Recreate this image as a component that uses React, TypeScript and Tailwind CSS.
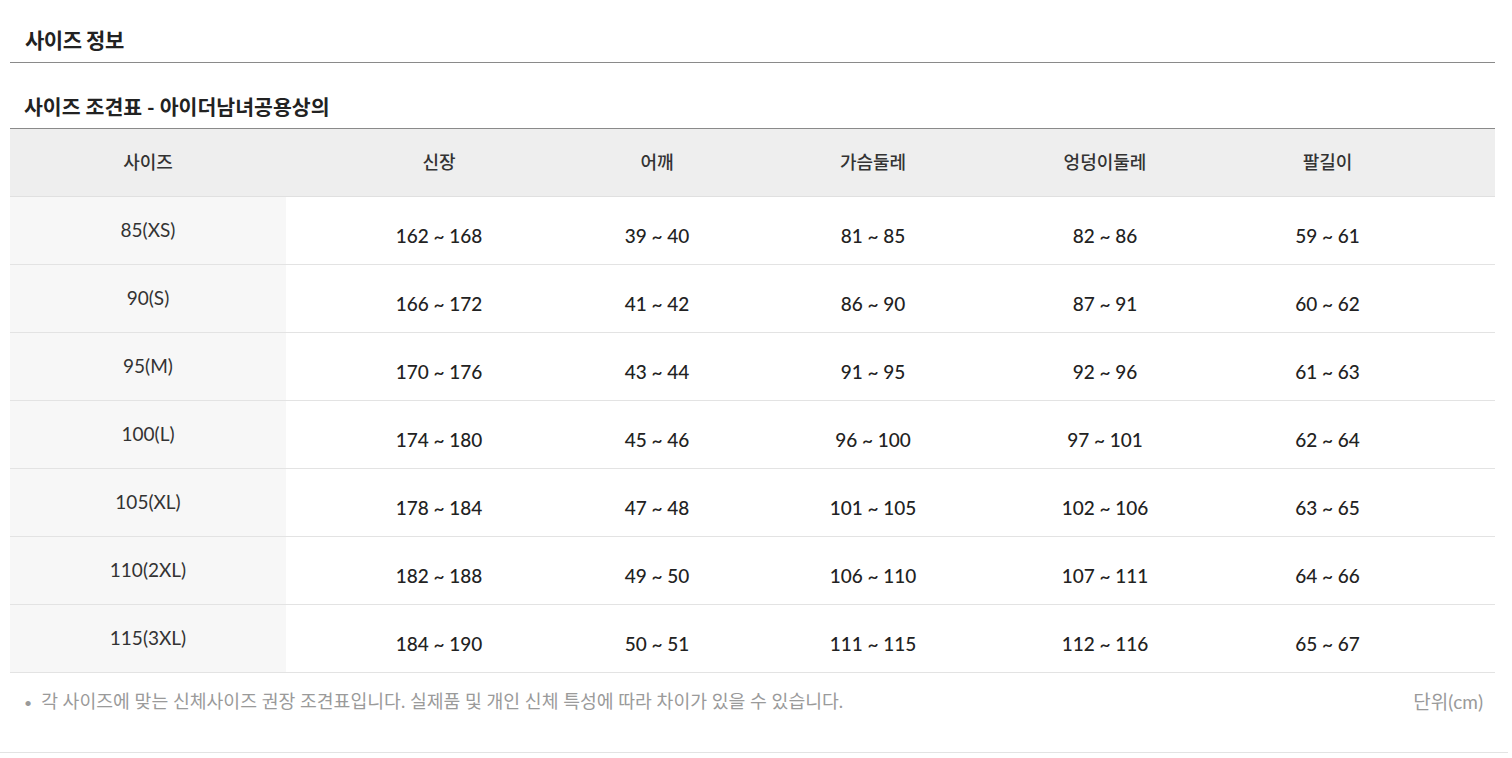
const headers = ["사이즈", "신장", "어깨", "가슴둘레", "엉덩이둘레", "팔길이"];

const rows = [
  ["85(XS)", "162 ~ 168", "39 ~ 40", "81 ~ 85", "82 ~ 86", "59 ~ 61"],
  ["90(S)", "166 ~ 172", "41 ~ 42", "86 ~ 90", "87 ~ 91", "60 ~ 62"],
  ["95(M)", "170 ~ 176", "43 ~ 44", "91 ~ 95", "92 ~ 96", "61 ~ 63"],
  ["100(L)", "174 ~ 180", "45 ~ 46", "96 ~ 100", "97 ~ 101", "62 ~ 64"],
  ["105(XL)", "178 ~ 184", "47 ~ 48", "101 ~ 105", "102 ~ 106", "63 ~ 65"],
  ["110(2XL)", "182 ~ 188", "49 ~ 50", "106 ~ 110", "107 ~ 111", "64 ~ 66"],
  ["115(3XL)", "184 ~ 190", "50 ~ 51", "111 ~ 115", "112 ~ 116", "65 ~ 67"],
];

const grid = "grid grid-cols-[276px_306px_130px_302px_162px_1fr]";

export default function App() {
  return (
    <div className="w-[1508px] bg-white font-['Lato','Noto_Sans_CJK_KR',sans-serif] border-b border-[#e3e3e3] pb-[21px]">
      <div className="ml-[10px] w-[1485px]">
        <div className="h-[63px] flex items-center pt-[18px] pl-[15px] border-b border-[#8a8a8a]">
          <h2 className="text-[21px] font-bold text-[#222] tracking-[-0.5px]">사이즈 정보</h2>
        </div>

        <div className="h-[65px] flex items-center pt-[24px] pl-[14px]">
          <h3 className="text-[20.5px] font-bold text-[#222]">
            사이즈 조견표 - 아이더남녀공용상의
          </h3>
        </div>

        <div className="border-t border-[#8a8a8a]">
          <div className={`${grid} h-[68px] bg-[#eeeeee] border-b border-[#e0e0e0]`}>
            {headers.map((h, i) => (
              <div
                key={h}
                className={`flex items-center justify-center text-[18px] font-medium text-[#333] ${i === 5 ? "pr-[26px]" : ""}`}
              >
                {h}
              </div>
            ))}
          </div>

          {rows.map((r) => (
            <div key={r[0]} className={`${grid} h-[68px] border-b border-[#e3e3e3]`}>
              <div className="flex items-center justify-center bg-[#f7f7f7] text-[19px] text-[#333]">
                {r[0]}
              </div>
              {r.slice(1).map((v, i) => (
                <div
                  key={i}
                  className={`flex items-center justify-center pt-[11px] text-[19px] font-medium text-[#222] ${i === 4 ? "pr-[26px]" : ""}`}
                >
                  {v}
                </div>
              ))}
            </div>
          ))}
        </div>

        <div className="h-[58px] flex items-center justify-between pl-[14px] pr-[12px] text-[#9a9a9a]">
          <p className="flex items-center text-[18.3px]">
            <span className="mr-[9px] text-[14px]">•</span>
            각 사이즈에 맞는 신체사이즈 권장 조견표입니다. 실제품 및 개인 신체 특성에 따라 차이가 있을 수 있습니다.
          </p>
          <span className="text-[19px]">단위(cm)</span>
        </div>
      </div>
    </div>
  );
}
